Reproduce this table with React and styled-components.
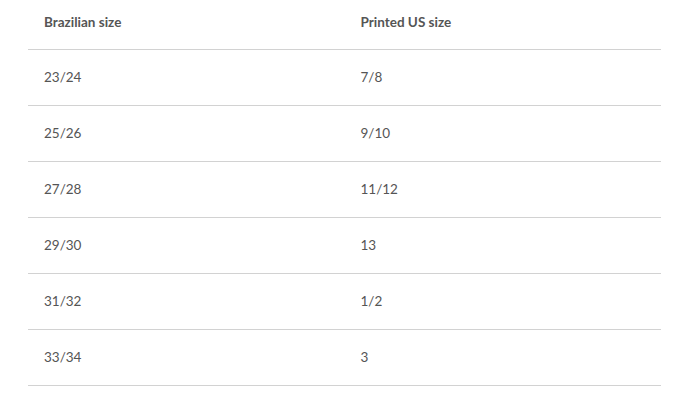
import styled, { createGlobalStyle } from 'styled-components';

const Global = createGlobalStyle`
  body {
    margin: 0;
    background: #fff;
    font-family: "Source Sans Pro", Lato, "Open Sans", sans-serif;
  }
`;

const Wrap = styled.div`
  padding: 0 19px 0 28px;
`;

const Table = styled.table`
  width: 100%;
  border-collapse: collapse;
  table-layout: fixed;
  color: #555;
`;

const Head = styled.th`
  text-align: left;
  font-size: 13.5px;
  font-weight: 700;
  height: 49px;
  padding: 0 16px 4px;
  box-sizing: border-box;
  border-bottom: 1px solid #d2d2d2;
`;

const Cell = styled.td`
  font-size: 13.5px;
  height: 56px;
  padding: 0 16px;
  box-sizing: border-box;
  border-bottom: 1px solid #d2d2d2;
`;

const rows = [
  ['23/24', '7/8'],
  ['25/26', '9/10'],
  ['27/28', '11/12'],
  ['29/30', '13'],
  ['31/32', '1/2'],
  ['33/34', '3'],
];

const App = () => {
  return (
    <Wrap>
      <Global />
      <Table>
        <thead>
          <tr>
            <Head>Brazilian size</Head>
            <Head>Printed US size</Head>
          </tr>
        </thead>
        <tbody>
          {rows.map(([br, us]) => (
            <tr key={br}>
              <Cell>{br}</Cell>
              <Cell>{us}</Cell>
            </tr>
          ))}
        </tbody>
      </Table>
    </Wrap>
  );
};

export default App;
